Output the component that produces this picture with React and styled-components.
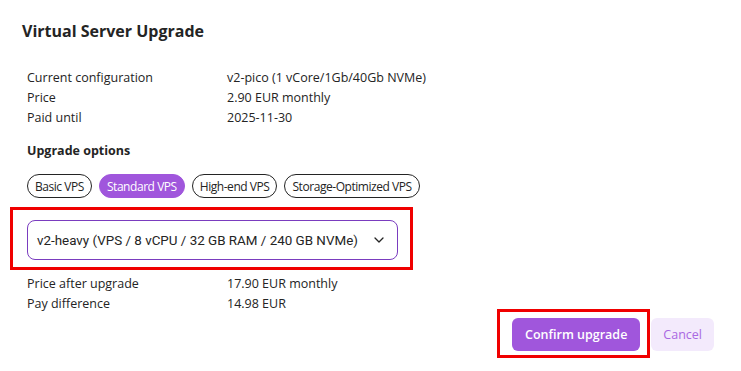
import React, { useState } from 'react';
import styled, { createGlobalStyle } from 'styled-components';

const GlobalStyle = createGlobalStyle`
  html, body {
    margin: 0;
    padding: 0;
    background: #ffffff;
  }
  body {
    font-family: "Open Sans", "Noto Sans", Arial, sans-serif;
    color: #242424;
  }
`;

const Dialog = styled.div`
  width: 741px;
  height: 371px;
  box-sizing: border-box;
  padding: 18px 27px 0 22px;
  display: flex;
  flex-direction: column;
`;

const Title = styled.h2`
  margin: 0;
  font-size: 16px;
  line-height: 26px;
  font-weight: 700;
  color: #242424;
`;

const Body = styled.div`
  padding-left: 5px;
  display: flex;
  flex-direction: column;
`;

const InfoTable = styled.div`
  display: grid;
  grid-template-columns: 200px 1fr;
  margin-top: ${(p) => p.$top}px;
  font-size: 12.5px;
  line-height: 20px;
  color: #242424;
`;

const SectionLabel = styled.div`
  margin-top: 13px;
  font-size: 12.5px;
  line-height: 20px;
  font-weight: 700;
`;

const Pills = styled.div`
  display: flex;
  gap: 7px;
  margin-top: 13px;
`;

const Pill = styled.button`
  height: 24px;
  box-sizing: border-box;
  padding: 0 7px;
  border-radius: 12px;
  border: 1px solid ${(p) => (p.$active ? '#a056dc' : '#242424')};
  background: ${(p) => (p.$active ? '#a056dc' : '#ffffff')};
  color: ${(p) => (p.$active ? '#ffffff' : '#242424')};
  font-family: "Open Sans", "Noto Sans", Arial, sans-serif;
  font-size: 12px;
  letter-spacing: -0.45px;
  cursor: pointer;
`;

const Highlight = styled.div`
  position: relative;
  margin-top: 22px;
  width: 371px;

  &::after {
    content: '';
    position: absolute;
    left: -17px;
    right: -15px;
    top: -13px;
    bottom: -10px;
    border: 3px solid #f00000;
    pointer-events: none;
  }
`;

const SelectBox = styled.div`
  height: 40px;
  box-sizing: border-box;
  border: 1px solid #7a3cbf;
  border-radius: 8px;
  display: flex;
  align-items: center;
  justify-content: space-between;
  padding: 0 13px 0 9px;
  font-family: Roboto, "Liberation Sans", Arial, sans-serif;
  font-size: 13.4px;
  color: #242424;
`;

const Footer = styled.div`
  display: flex;
  justify-content: flex-end;
  gap: 11px;
  margin-top: 4px;
`;

const ButtonWrap = styled.div`
  position: relative;
  display: flex;

  &::after {
    content: '';
    display: ${(p) => (p.$marked ? 'block' : 'none')};
    position: absolute;
    left: -15px;
    right: -10px;
    top: -9px;
    bottom: -7px;
    border: 3px solid #f00000;
    pointer-events: none;
  }
`;

const Button = styled.button`
  height: 33px;
  border: 0;
  border-radius: 6px;
  padding: 0 ${(p) => (p.$primary ? 13 : 12)}px;
  background: ${(p) => (p.$primary ? '#a056dc' : '#f3eafc')};
  color: ${(p) => (p.$primary ? '#ffffff' : '#a968e2')};
  font-family: "Open Sans", "Noto Sans", Arial, sans-serif;
  font-size: 12.5px;
  font-weight: ${(p) => (p.$primary ? 600 : 400)};
  cursor: pointer;
`;

const Chevron = () => (
  <svg width="10" height="6" viewBox="0 0 10 6" fill="none">
    <path d="M1 1l4 4 4-4" stroke="#242424" strokeWidth="1.3" strokeLinecap="round" strokeLinejoin="round" />
  </svg>
);

const current = [
  ['Current configuration', 'v2-pico (1 vCore/1Gb/40Gb NVMe)'],
  ['Price', '2.90 EUR monthly'],
  ['Paid until', '2025-11-30'],
];

const after = [
  ['Price after upgrade', '17.90 EUR monthly'],
  ['Pay difference', '14.98 EUR'],
];

const tiers = ['Basic VPS', 'Standard VPS', 'High-end VPS', 'Storage-Optimized VPS'];

export default function App() {
  const [tier, setTier] = useState('Standard VPS');

  return (
    <>
      <GlobalStyle />
      <Dialog>
        <Title>Virtual Server Upgrade</Title>
        <Body>
          <InfoTable $top={24}>
            {current.map(([k, v]) => (
              <React.Fragment key={k}>
                <span>{k}</span>
                <span>{v}</span>
              </React.Fragment>
            ))}
          </InfoTable>
          <SectionLabel>Upgrade options</SectionLabel>
          <Pills>
            {tiers.map((t) => (
              <Pill key={t} $active={t === tier} onClick={() => setTier(t)}>
                {t}
              </Pill>
            ))}
          </Pills>
          <Highlight>
            <SelectBox>
              <span>v2-heavy (VPS / 8 vCPU / 32 GB RAM / 240 GB NVMe)</span>
              <Chevron />
            </SelectBox>
          </Highlight>
          <InfoTable $top={14}>
            {after.map(([k, v]) => (
              <React.Fragment key={k}>
                <span>{k}</span>
                <span>{v}</span>
              </React.Fragment>
            ))}
          </InfoTable>
        </Body>
        <Footer>
          <ButtonWrap $marked>
            <Button $primary>Confirm upgrade</Button>
          </ButtonWrap>
          <ButtonWrap>
            <Button>Cancel</Button>
          </ButtonWrap>
        </Footer>
      </Dialog>
    </>
  );
}
